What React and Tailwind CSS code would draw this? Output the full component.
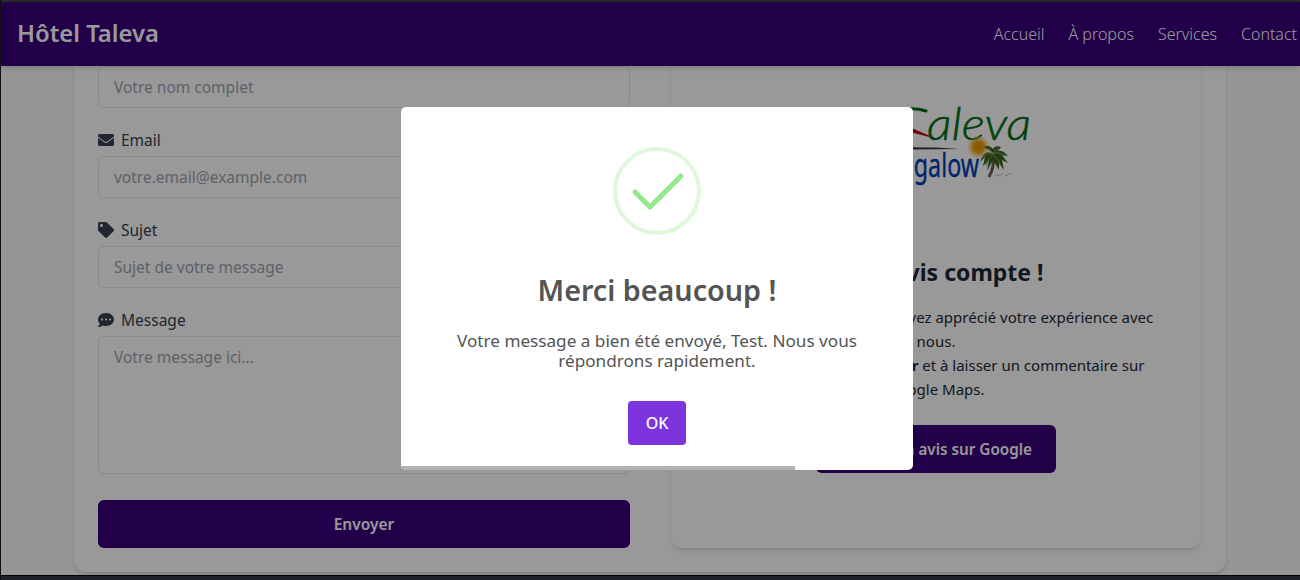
import React from 'react';
import { FaEnvelope, FaTag, FaCommentDots } from 'react-icons/fa';

const field = 'flex w-full rounded-md border border-[#e5e7eb] px-[15px] text-[#9ca3af]';

function Label({ icon: Icon, children }) {
  return (
    <div className="mt-5 flex h-6 items-center gap-[7px] text-[#374151]">
      <Icon size={16} />
      <span className="pt-0.5">{children}</span>
    </div>
  );
}

function Logo() {
  return (
    <svg className="h-[100px] w-[200px]" viewBox="836 96 200 100" fill="none">
      <path d="M882 116C890 110 912 106 926 111" stroke="#006b12" strokeWidth="3" strokeLinecap="round" />
      <path d="M895 122L914 129L937 139L910 132Z" fill="#c4001b" />
      <text x="927" y="140" textLength="104" lengthAdjust="spacingAndGlyphs" fill="#007014" stroke="#007014" strokeWidth=".5" fontFamily="Lato" fontStyle="italic" fontSize="46" fontWeight="300">aleva</text>
      <path d="M860 147L935 147.5L960 149L860 150Z" fill="#333" />
      <text x="870" y="177" textLength="109" lengthAdjust="spacingAndGlyphs" fill="#063eb8" stroke="#063eb8" strokeWidth=".4" fontFamily="Noto Sans" fontSize="33">Bungalow</text>
      <defs>
        <radialGradient id="sun">
          <stop offset="0" stopColor="#e99000" />
          <stop offset=".45" stopColor="#eba012" />
          <stop offset="1" stopColor="#f5c96a" stopOpacity="0" />
        </radialGradient>
      </defs>
      <circle cx="978.500" cy="147" r="12" fill="url(#sun)" />
      <path d="M989 177Q995 166 993 155" stroke="#706048" strokeWidth="3" />
      <path d="M993 154Q985 148 980 162L985 157L983 166L989 160L987 171L993 160L999 170L999 163L1004 170L1002 160L1008 163L1002 155L1008 156Q1003 150 998 151L1001 147Q995 145 993 149Q989 144 984 147L989 150Z" fill="#3d6426" />
      <path d="M993 154Q987 152 983 158M993 154Q999 151 1005 156M993 155Q999 159 1001 166M993 154Q988 158 986 166M993 153L988 148M993 153L999 148" stroke="#8aa05a" strokeWidth="1" />
      <path d="M995 176L1003 174M1005 176L1012 173" stroke="#888" strokeOpacity=".5" />
    </svg>
  );
}

export default function App() {
  return (
    <div className="relative h-[580px] w-[1300px] overflow-hidden bg-[#1a1a1f] pl-px font-['Noto_Sans',sans-serif] text-[15.5px]">
      <div className="flex h-full flex-col border-t-2 border-[#45454a] bg-[#f8fafc]">
        <header className="relative z-10 flex h-16 shrink-0 items-center justify-between bg-[#37007a] pl-4 pr-[3px] text-white shadow-md">
          <h1 className="text-[23.8px] font-semibold">Hôtel Taleva</h1>
          <nav className="flex gap-6 text-base font-light">
            <span>Accueil</span><span>À propos</span><span>Services</span><span>Contact</span>
          </nav>
        </header>
        <main className="flex h-[509px] shrink-0 flex-col overflow-hidden pl-[73px] pr-[74px]">
          <div className="-mt-6 flex h-[530px] gap-[41px] rounded-xl bg-white pb-6 pl-6 shadow-md">
            <form className="w-[532px] shrink-0 pt-6">
              <div className={`${field} h-[42px] items-center pt-0.5`}>Votre nom complet</div>
              <Label icon={FaEnvelope}>Email</Label>
              <div className={`${field} mt-1 h-[42px] items-center pt-0.5`}>votre.email@example.com</div>
              <Label icon={FaTag}>Sujet</Label>
              <div className={`${field} mt-1 h-[42px] items-center pt-0.5`}>Sujet de votre message</div>
              <Label icon={FaCommentDots}>Message</Label>
              <div className={`${field} mt-1 h-[138px] items-start pt-[9px]`}>Votre message ici...</div>
              <button type="button" className="mt-[26px] flex h-12 w-full items-center justify-center rounded-md bg-[#37007a] pt-0.5 font-semibold text-white">Envoyer</button>
            </form>
            <section className="flex h-[506px] w-[530px] shrink-0 flex-col items-center rounded-xl pt-[54px] text-[#1f2937] shadow-md">
              <Logo />
              <h2 className="mt-[58px] pr-1 text-[23px] font-bold leading-9">Votre avis compte !</h2>
              <div className="mt-[15px] whitespace-nowrap text-center text-[15px] leading-6">
                <p className="pl-1">Nous espérons que vous avez apprécié votre expérience avec</p>
                <p>nous.</p>
                <p>N'hésitez pas à <b>nous noter</b> et à laisser un commentaire sur</p>
                <p>Google Maps.</p>
              </div>
              <button type="button" className="mt-6 flex h-12 w-60 items-center justify-end whitespace-nowrap rounded-md bg-[#37007a] pr-6 text-[15.25px] font-semibold text-white">Laisser un avis sur Google</button>
            </section>
          </div>
        </main>
        <footer className="h-[5px] shrink-0 border-t border-black bg-[#343a44]" />
      </div>
      <div className="absolute inset-0 z-20 bg-black/40" />
      <div className="absolute left-[401px] top-[107px] z-30 flex h-[363px] w-[512px] flex-col items-center overflow-hidden rounded-[5px] bg-white pt-10 text-[#545454]">
        <svg className="size-[88px]" viewBox="0 0 88 88" fill="none">
          <circle cx="44" cy="44" r="42" stroke="#94e98c" strokeOpacity=".3" strokeWidth="4" />
          <path d="M22 45L37 60L68 29" stroke="#94e98c" strokeWidth="5" strokeLinecap="round" strokeLinejoin="round" />
        </svg>
        <h2 className="mt-[35px] text-[28.7px] font-semibold leading-10">Merci beaucoup !</h2>
        <div className="mt-[21px] whitespace-nowrap text-center text-[17.15px] leading-5">
          <p>Votre message a bien été envoyé, Test. Nous vous</p>
          <p>répondrons rapidement.</p>
        </div>
        <button type="button" className="mt-[30px] h-11 w-[58px] rounded bg-[#7c35dc] text-base font-medium text-white">OK</button>
        <div className="mt-auto h-1 w-[394px] self-start bg-[#b2b2b2]" />
      </div>
    </div>
  );
}
